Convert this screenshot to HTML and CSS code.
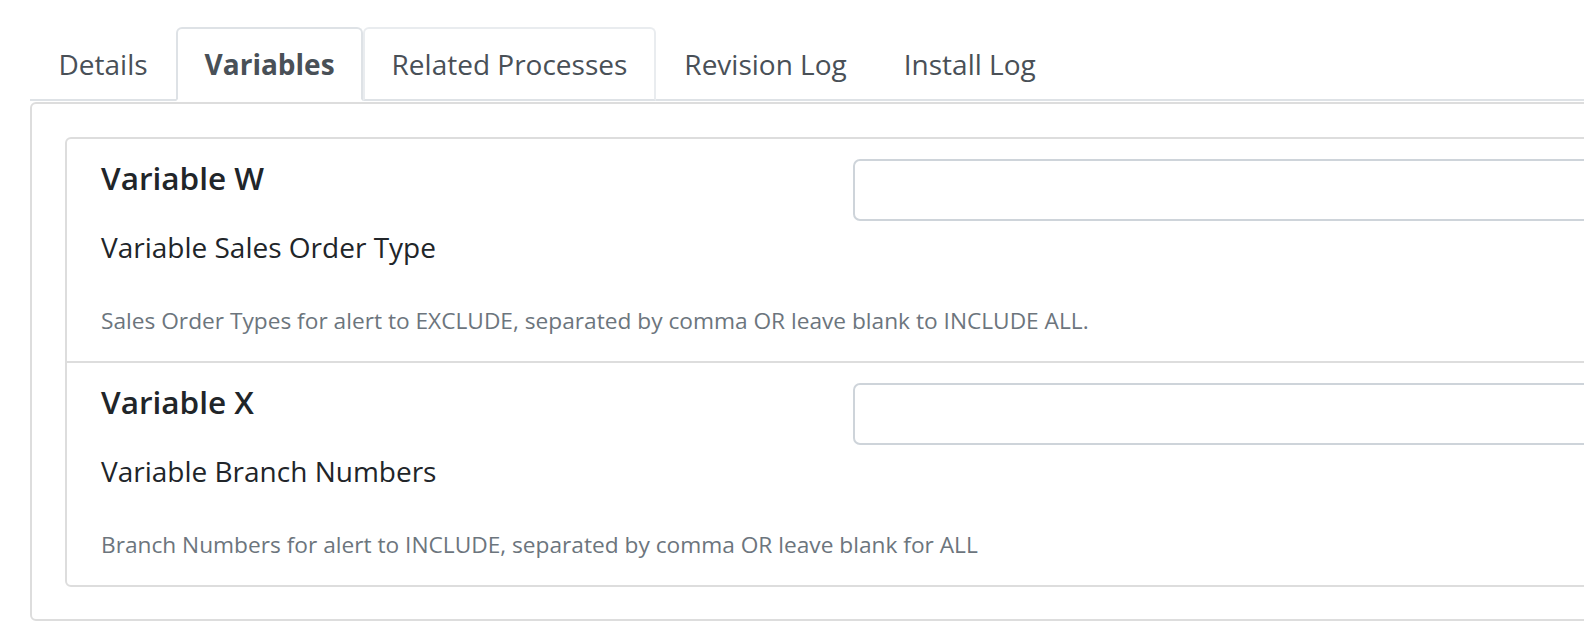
FILE: index.html
```html
<!DOCTYPE html>
<html lang="en">
<head>
<meta charset="utf-8">
<title>Variables</title>
<link rel="stylesheet" href="styles.css">
</head>
<body>
<div class="page">
  <ul class="tabs">
    <li class="tab">Details</li>
    <li class="tab active">Variables</li>
    <li class="tab hovered">Related Processes</li>
    <li class="tab">Revision Log</li>
    <li class="tab">Install Log</li>
  </ul>
  <div class="panel">
    <div class="card">
      <div class="var-row">
        <h5 class="var-title">Variable W</h5>
        <input class="var-input" type="text">
        <p class="var-label">Variable Sales Order Type</p>
        <small class="var-help">Sales Order Types for alert to EXCLUDE, separated by comma OR leave blank to INCLUDE ALL.</small>
      </div>
      <div class="var-row">
        <h5 class="var-title">Variable X</h5>
        <input class="var-input" type="text">
        <p class="var-label">Variable Branch Numbers</p>
        <small class="var-help">Branch Numbers for alert to INCLUDE, separated by comma OR leave blank for ALL</small>
      </div>
    </div>
  </div>
</div>
</body>
</html>
```
FILE: styles.css
```css
html, body {
  margin: 0;
  padding: 0;
  background: #fff;
}
body {
  overflow: hidden;
  font-family: "Open Sans", "Noto Sans", "Liberation Sans", sans-serif;
  color: #212529;
}
.page {
  width: 1700px;
  padding: 27px 0 0 30px;
  box-sizing: border-box;
}
.tabs {
  display: flex;
  list-style: none;
  margin: 0;
  padding: 0;
  border-bottom: 2px solid #dee2e6;
}
.tab {
  padding: 14px 26.5px;
  border: 2px solid transparent;
  border-radius: 6px 6px 0 0;
  margin-bottom: -2px;
  font-size: 28px;
  line-height: 42px;
  color: #495057;
  white-space: nowrap;
}
.tab.active {
  border-color: #dee2e6 #dee2e6 #fff;
  background: #fff;
  font-weight: 700;
}
.tab.hovered {
  border-color: #e9ecef #e9ecef #dee2e6;
}
.panel {
  margin-top: 1px;
  border: 2px solid #dddddd;
  border-radius: 6px;
  padding: 33px 0 32px 33px;
}
.card {
  border: 2px solid #dddddd;
  border-radius: 6px;
}
.var-row {
  display: grid;
  grid-template-columns: 752px 1fr;
  align-items: start;
  padding: 20px 0 22px 34px;
}
.var-row + .var-row {
  border-top: 2px solid #dddddd;
}
.var-title {
  grid-column: 1;
  grid-row: 1;
  margin: 0 0 29px;
  font-size: 31.5px;
  line-height: 38px;
  font-weight: 600;
  color: #212529;
}
.var-input {
  grid-column: 2;
  grid-row: 1;
  display: block;
  box-sizing: border-box;
  width: 100%;
  height: 62px;
  margin: 0;
  border: 2px solid #ced4da;
  border-radius: 7px;
  background: #fff;
  outline: none;
}
.var-label {
  grid-column: 1;
  grid-row: 2;
  margin: 0 0 34px;
  font-size: 28px;
  line-height: 42px;
  color: #212529;
}
.var-help {
  grid-column: 1 / -1;
  grid-row: 3;
  display: block;
  font-size: 22.7px;
  line-height: 36.75px;
  padding-top: 1px;
  height: 36.75px;
  box-sizing: border-box;
  color: #6c757d;
  white-space: nowrap;
}
```
